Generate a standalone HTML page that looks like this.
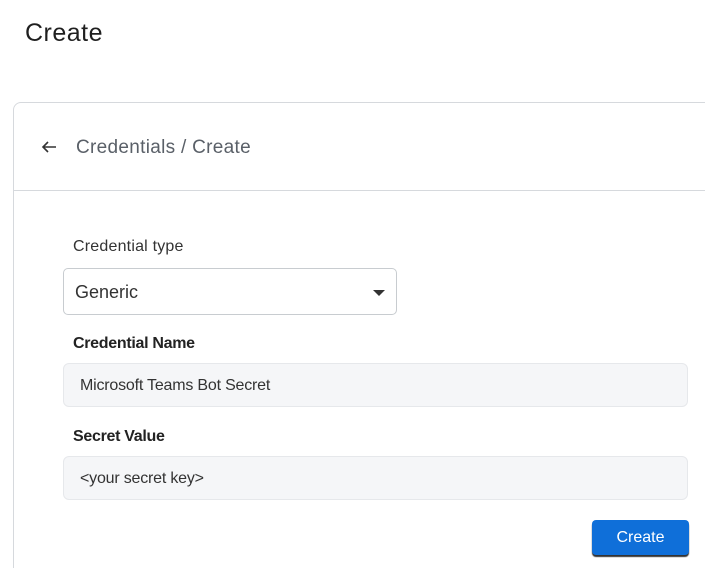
<!DOCTYPE html>
<html style="overflow:hidden"><head><style>
html,body{margin:0;width:705px;height:568px;overflow:hidden}
body{background:#fff;font-family:"Liberation Sans",sans-serif;position:relative}
.a{position:absolute}
</style></head><body>
<div class="a" style="left:25px;top:19px;font-size:25px;color:#1f1f1f;letter-spacing:.5px">Create</div>
<div class="a" style="left:13px;top:102px;width:720px;height:480px;border:1px solid #d6d9dd;border-radius:8px;box-sizing:border-box"></div>
<div class="a" style="left:14px;top:190px;width:700px;height:1px;background:#d6d9dd"></div>
<svg class="a" style="left:40px;top:139px" width="18" height="16" viewBox="0 0 18 16"><path d="M16 8H3M8 3L3 8l5 5" fill="none" stroke="#333" stroke-width="1.6"/></svg>
<div class="a" style="left:76px;top:137px;font-size:19px;color:#5a6068;letter-spacing:.3px">Credentials / Create</div>
<div class="a" style="left:73px;top:238px;font-size:16px;color:#333;letter-spacing:.2px">Credential type</div>
<div class="a" style="left:63px;top:268px;width:334px;height:47px;border:1px solid #c8ccd0;border-radius:5px;box-sizing:border-box"></div>
<div class="a" style="left:75px;top:282px;font-size:18px;color:#333">Generic</div>
<div class="a" style="left:373px;top:290px;width:0;height:0;border-left:6px solid transparent;border-right:6px solid transparent;border-top:6px solid #333"></div>
<div class="a" style="left:73px;top:335px;font-size:16px;color:#222;font-weight:bold;letter-spacing:-.3px">Credential Name</div>
<div class="a" style="left:63px;top:363px;width:625px;height:44px;background:#f5f6f8;border:1px solid #e6e8eb;border-radius:6px;box-sizing:border-box"></div>
<div class="a" style="left:80px;top:377px;font-size:16px;color:#333;letter-spacing:-.2px">Microsoft Teams Bot Secret</div>
<div class="a" style="left:73px;top:428px;font-size:16px;color:#222;font-weight:bold;letter-spacing:-.3px">Secret Value</div>
<div class="a" style="left:63px;top:456px;width:625px;height:44px;background:#f5f6f8;border:1px solid #e6e8eb;border-radius:6px;box-sizing:border-box"></div>
<div class="a" style="left:80px;top:470px;font-size:16px;color:#333;letter-spacing:-.2px">&lt;your secret key&gt;</div>
<div class="a" style="left:592px;top:520px;width:97px;height:35px;background:#0f6fd9;border-radius:4px;box-shadow:0 2px 1px #333;color:#fff;font-size:16px;text-align:center;line-height:35px">Create</div>
</body></html>
